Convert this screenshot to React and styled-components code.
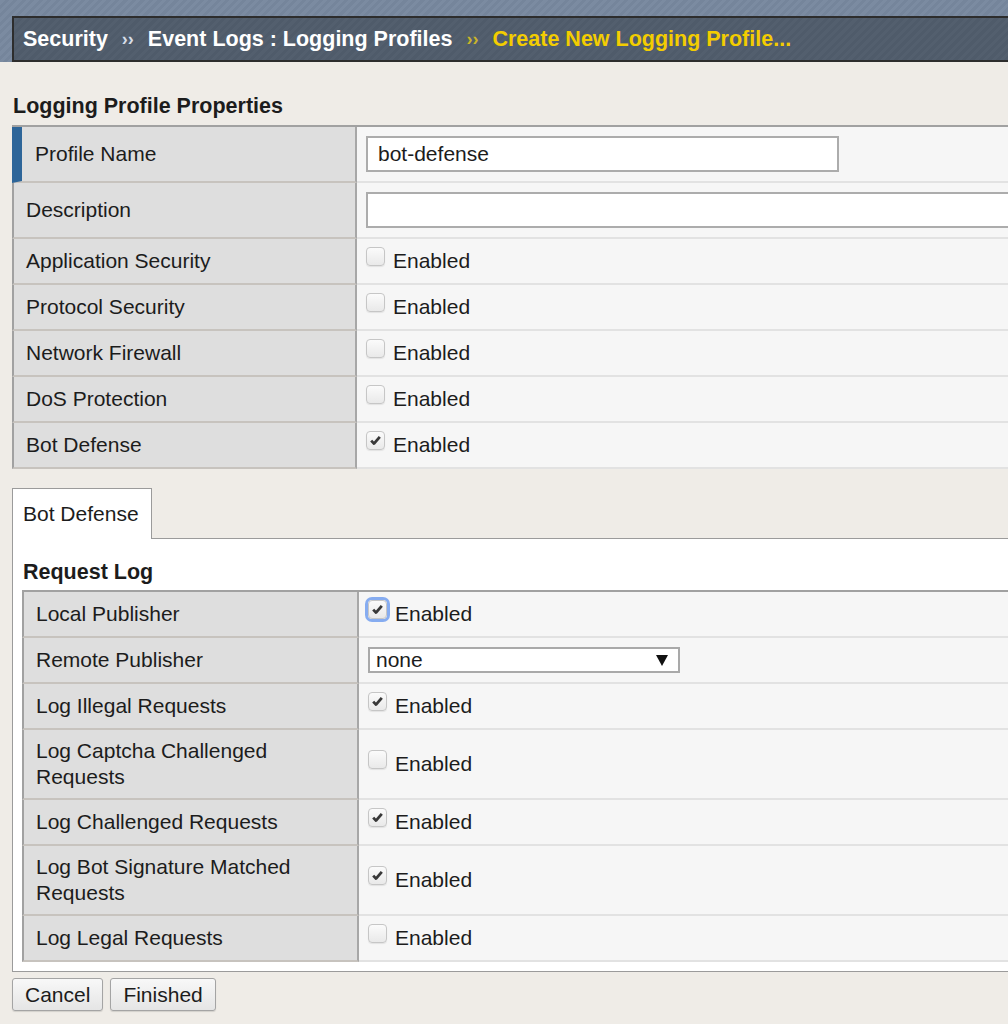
import React from "react";
import styled, { createGlobalStyle } from "styled-components";

const topRows = [
  { label: "Application Security", checked: false },
  { label: "Protocol Security", checked: false },
  { label: "Network Firewall", checked: false },
  { label: "DoS Protection", checked: false },
  { label: "Bot Defense", checked: true },
];

const requestRows = [
  { label: "Log Illegal Requests", checked: true },
  { label: "Log Captcha Challenged Requests", checked: false, tall: true },
  { label: "Log Challenged Requests", checked: true },
  { label: "Log Bot Signature Matched Requests", checked: true, tall: true },
  { label: "Log Legal Requests", checked: false },
];

const CheckBox = ({ checked, focused }) => (
  <Box $focused={focused}>
    {checked && (
      <svg width="13" height="13" viewBox="0 0 13 13">
        <path d="M2.2 6.6 L5 9.6 L10.8 2.8" fill="none" stroke="#383838" strokeWidth="2.8" strokeLinejoin="round" />
      </svg>
    )}
  </Box>
);

const Enabled = ({ checked, focused }) => (
  <Check>
    <CheckBox checked={checked} focused={focused} />
    <span>Enabled</span>
  </Check>
);

const App = () => {
  return (
    <Page>
      <GlobalStyle />
      <Header>
        <Crumbs>
          <span>Security</span>
          <Sep>››</Sep>
          <span>Event Logs : Logging Profiles</span>
          <Sep $current>››</Sep>
          <Current>Create New Logging Profile...</Current>
        </Crumbs>
      </Header>

      <Content>
        <SectionTitle>Logging Profile Properties</SectionTitle>
        <Table>
          <Row $h={56}>
            <Label $marker>Profile Name</Label>
            <Value>
              <TextInput $w={473}>bot-defense</TextInput>
            </Value>
          </Row>
          <Row $h={56}>
            <Label>Description</Label>
            <Value>
              <TextInput $w={720} />
            </Value>
          </Row>
          {topRows.map(r => (
            <Row key={r.label} $h={46}>
              <Label>{r.label}</Label>
              <Value>
                <Enabled checked={r.checked} />
              </Value>
            </Row>
          ))}
        </Table>

        <TabStrip>
          <Tab>Bot Defense</Tab>
          <TabFill />
        </TabStrip>
        <Panel>
          <PanelTitle>Request Log</PanelTitle>
          <Table $inner>
            <Row $h={46} $inner>
              <Label $inner>Local Publisher</Label>
              <Value>
                <Enabled checked focused />
              </Value>
            </Row>
            <Row $h={46} $inner>
              <Label $inner>Remote Publisher</Label>
              <Value>
                <Select>
                  <span>none</span>
                  <svg width="12" height="11" viewBox="0 0 12 11">
                    <polygon points="0,0 12,0 6,11" fill="#111" />
                  </svg>
                </Select>
              </Value>
            </Row>
            {requestRows.map(r => (
              <Row key={r.label} $h={r.tall ? 70 : 46} $inner>
                <Label $inner>{r.label}</Label>
                <Value>
                  <Enabled checked={r.checked} />
                </Value>
              </Row>
            ))}
          </Table>
        </Panel>

        <Buttons>
          <Button>Cancel</Button>
          <Button>Finished</Button>
        </Buttons>
      </Content>
    </Page>
  );
};

export default App;

const GlobalStyle = createGlobalStyle`
  html, body {
    margin: 0;
    padding: 0;
    background: #efece7;
    overflow: hidden;
  }
  body {
    font-family: "Liberation Sans", Arial, Helvetica, sans-serif;
    font-size: 21px;
    color: #1c1c1c;
  }
`;

const Page = styled.div`
  width: 1008px;
  min-height: 1024px;
  overflow: hidden;
  background: #efece7;
`;

const Header = styled.div`
  padding: 16px 0 0 12px;
  background: repeating-linear-gradient(
    -45deg,
    #75859b 0 3px,
    #7b8ba1 3px 6px
  );
`;

const Crumbs = styled.div`
  height: 42px;
  display: flex;
  align-items: center;
  gap: 14px;
  padding-left: 9px;
  border: 2px solid #2d2d2d;
  border-right: none;
  background: repeating-linear-gradient(
    -45deg,
    #4f5b6a 0 3px,
    #535f6e 3px 6px
  );
  color: #ffffff;
  font-weight: bold;
  font-size: 21.5px;
  white-space: nowrap;
`;

const Sep = styled.span`
  font-size: 18px;
  color: ${p => (p.$current ? "#c9b42a" : "#d6dde8")};
`;

const Current = styled.span`
  color: #f3cd00;
`;

const Content = styled.div`
  padding: 32px 0 0 12px;
`;

const SectionTitle = styled.div`
  font-weight: bold;
  font-size: 21.5px;
  line-height: 24px;
  margin-bottom: 7px;
  padding-left: 1px;
`;

const Table = styled.div`
  border-top: 2px solid #a1a1a1;
  margin-left: ${p => (p.$inner ? "9px" : "0")};
`;

const Row = styled.div`
  display: grid;
  grid-template-columns: ${p => (p.$inner ? "337px" : "345px")} 1fr;
  height: ${p => p.$h}px;
`;

const Label = styled.div`
  display: flex;
  align-items: center;
  padding: 0 44px 0 ${p => (p.$marker ? "13px" : "12px")};
  background: #dedede;
  border-left: ${p => (p.$marker ? "10px solid #2d6599" : "2px solid #a1a1a1")};
  border-right: 2px solid #a7a7a7;
  border-bottom: 2px solid #c7c3be;
  line-height: 26px;
`;

const Value = styled.div`
  display: flex;
  align-items: center;
  min-width: 0;
  overflow: hidden;
  padding-left: 9px;
  background: #f6f6f6;
  border-bottom: 2px solid #e2e2e2;
`;

const TextInput = styled.div`
  box-sizing: border-box;
  width: ${p => p.$w}px;
  height: 36px;
  flex-shrink: 0;
  display: flex;
  align-items: center;
  padding-left: 10px;
  background: #ffffff;
  border: 2px solid #acacac;
`;

const Check = styled.div`
  display: flex;
  align-items: center;
  gap: 8px;
`;

const Box = styled.span`
  box-sizing: border-box;
  width: 19px;
  height: 19px;
  margin-bottom: 9px;
  display: flex;
  align-items: center;
  justify-content: center;
  border: 1px solid #c6c6c6;
  border-radius: 4px;
  background: linear-gradient(#fbfbfb, #e9e9e9);
  box-shadow: ${p =>
    p.$focused ? "0 0 0 3px #86acf0" : "0 1px 1px rgba(0, 0, 0, 0.08)"};
`;

const TabStrip = styled.div`
  display: flex;
  margin-top: 19px;
  height: 51px;
`;

const Tab = styled.div`
  display: flex;
  align-items: center;
  padding: 0 12px 0 10px;
  background: #ffffff;
  border: 1px solid #9b9b9b;
  border-bottom: none;
`;

const TabFill = styled.div`
  flex: 1;
  border-bottom: 1px solid #9b9b9b;
`;

const Panel = styled.div`
  background: #ffffff;
  border-left: 1px solid #9b9b9b;
  border-bottom: 1px solid #9b9b9b;
  padding: 21px 0 9px 0;
`;

const PanelTitle = styled.div`
  font-weight: bold;
  font-size: 21.5px;
  line-height: 24px;
  margin: 0 0 6px 10px;
`;

const Select = styled.div`
  box-sizing: border-box;
  width: 312px;
  height: 26px;
  display: flex;
  align-items: center;
  justify-content: space-between;
  padding: 0 10px 0 6px;
  background: #ffffff;
  border: 2px solid #a9a9a9;
`;

const Buttons = styled.div`
  display: flex;
  gap: 7px;
  margin-top: 6px;
`;

const Button = styled.div`
  box-sizing: border-box;
  height: 33px;
  display: flex;
  align-items: center;
  padding: 0 12px;
  border: 1px solid #a4a4a4;
  border-radius: 3px;
  background: linear-gradient(#f8f8f8, #e5e5e5);
  box-shadow: 0 1px 1px rgba(0, 0, 0, 0.12);
`;
